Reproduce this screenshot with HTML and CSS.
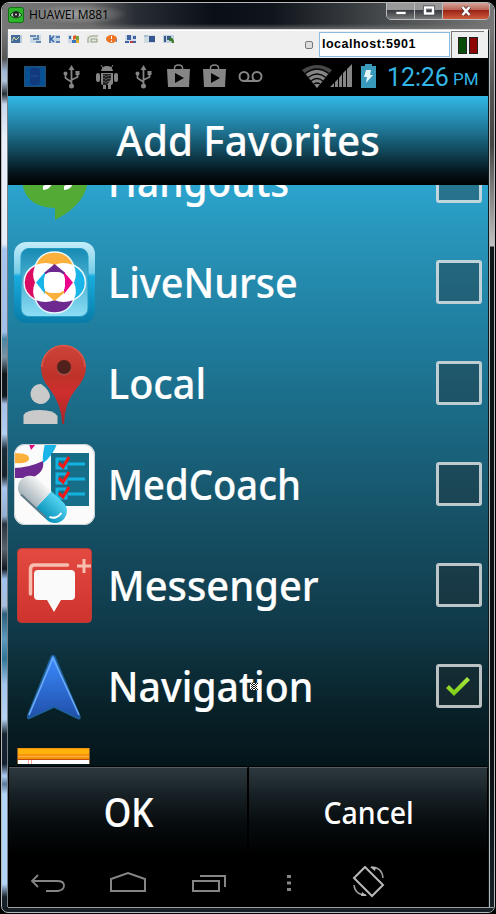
FILE: index.html
```html
<!DOCTYPE html>
<html lang="en">
<head>
<meta charset="utf-8">
<title>HUAWEI M881</title>
<link rel="stylesheet" href="styles.css">
</head>
<body>
<div class="window">
  <div class="titlebar">
    <svg class="app-icon" viewBox="0 0 16 16"><rect x=".5" y=".5" width="15" height="15" rx="2" fill="#2db52b" stroke="#146e16"/><path d="M2 8Q8 1 14 8Q8 14 2 8" fill="#b9d9b9" stroke="#173b18"/><circle cx="8" cy="7.5" r="3" fill="#222"/><circle cx="8" cy="7.5" r="1" fill="#ddd"/></svg>
    <span class="title">HUAWEI M881</span>
    <div class="controls">
      <span class="control"><svg viewBox="0 0 12 12"><rect x="1" y="6.5" width="10" height="3" fill="#fff" stroke="#4a4d55" stroke-width=".7"/></svg></span>
      <span class="control"><svg viewBox="0 0 12 12"><rect x="2" y="2.5" width="8" height="6" fill="none" stroke="#454850" stroke-width="4"/><rect x="2" y="2.5" width="8" height="6" fill="none" stroke="#fff" stroke-width="2.4"/></svg></span>
      <span class="control close"><svg viewBox="0 0 12 12"><path d="M2.5 2L9.500 10M9.500 2L2.500 10" stroke="#533" stroke-width="4"/><path d="M2.500 2L9.500 10M9.500 2L2.500 10" stroke="#fff" stroke-width="2.500"/></svg></span>
    </div>
  </div>
  <div class="edge-left"></div>
  <div class="client">
    <div class="toolbar">
      <div class="tools">
        <svg viewBox="0 0 11 8"><path fill="#b9c8d5" d="M0 0h11v8H0z"/><path fill="#436b9a" d="M0 0h9v8H0z"/><path d="M1 6l2-4 2 3 3-3" fill="none" stroke="#dedb9a"/></svg>
        <svg viewBox="0 0 11 8"><path fill="#cad9e6" d="M0 0h11v8H0z"/><path d="M0 1h6M3 4h6M8 0v3M6 7h5" stroke="#456da0" stroke-width="1.500"/></svg>
        <svg viewBox="0 0 11 8"><path fill="#c1d4e4" d="M0 0h11v8H0z"/><path d="M1 0v8M5 1L2 4l3 3M7 2h4M7 7h4" fill="none" stroke="#3a64a5" stroke-width="1.500"/></svg>
        <svg viewBox="0 0 11 8"><path fill="#cad7e4" d="M0 0h4v8H0z"/><path d="M1 1h2v3H1z" fill="#3873aa"/><path d="M5 1l3-1v4L5 5z" fill="#df5e29"/><path d="M8 1h3v4H8z" fill="#76a540"/><path d="M4 5h4v3H4z" fill="#3974bd"/><path d="M8 5h3v3H8z" fill="#e0ad34"/></svg>
        <svg viewBox="0 0 11 8"><path fill="#e3e4dc" d="M0 0h11v8H0z"/><path d="M1 8V3l3-2h7M4 4h6v3H4z" fill="none" stroke="#92a087"/></svg>
        <svg viewBox="0 0 11 8"><ellipse cx="5.500" cy="4" rx="5.500" ry="4" fill="#ed7424"/><path d="M5.500 1v3M5.500 5.500v1.500" stroke="#fff"/><path d="M10.500 4v3" stroke="#6f87a8"/></svg>
        <svg viewBox="0 0 11 8"><path fill="#d0dce7" d="M0 0h11v8H0z"/><path d="M2 0h4v5H2zM8 1h3v3H8zM8 6h3v2H8zM0 6h4v2H0z" fill="#40639f"/><path d="M5 6h3v2H5z" fill="#c03b44"/></svg>
        <svg viewBox="0 0 11 8"><path fill="#cfdae1" d="M0 0h11v8H0z"/><path d="M5 1h6v6H5z" fill="#34558e"/><path d="M0 1h4" stroke="#7fa0c0"/></svg>
        <svg viewBox="0 0 11 8"><path fill="#c0d0dc" d="M0 0h11v8H0z"/><path d="M1 1h2v6H1zM4 1h4v4H4z" fill="#39598b"/><path d="M6 3q5-1 5 5H9Q9 5 6 6z" fill="#347724"/></svg>
      </div>
      <span class="mini-box"></span>
      <span class="address">localhost:5901</span>
      <span class="leds"><i class="led green"></i><i class="led red"></i></span>
    </div>

    <div class="status">
      <div class="notifications">
        <svg viewBox="0 0 36 38"><rect x="7.500" y="8.500" width="21" height="20" fill="#075094" stroke="#284e70"/><rect x="13" y="10" width="10" height="17" rx="3" fill="#103a7c"/><path d="M14 18h8" stroke="#234f8f"/></svg>
        <svg viewBox="0 0 36 38"><g fill="none" stroke="#858585" stroke-width="1.800"><path d="M18.500 11v17M18.500 24l-6-4v-4M18.500 22l6-3v-4"/></g><g fill="#858585"><path d="M18.500 7l3 5h-6z"/><circle cx="12.500" cy="15.500" r="2"/><path d="M22.500 13h4v4h-4z"/><circle cx="18.500" cy="28" r="2.500"/></g></svg>
        <svg viewBox="0 0 36 38"><g fill="#858585"><path d="M12 13q1-5 6-5t6 5zM12 15h12v10q0 2-2 2v4h-3v-4h-2v4h-3v-4q-2 0-2-2z"/><rect x="7" y="15" width="4" height="9" rx="2"/><rect x="25" y="15" width="4" height="9" rx="2"/></g><path d="M14 10l-2-3M22 10l2-3" stroke="#858585"/><path d="M14 16h8v5l-4 6h-4z" fill="#222"/><path d="M15 17v9M17 18v8M19 17v7M21 17v5" stroke="#858585" stroke-dasharray="1 2"/></svg>
        <svg viewBox="0 0 36 38"><g fill="none" stroke="#858585" stroke-width="1.800"><path d="M18.500 11v17M18.500 24l-6-4v-4M18.500 22l6-3v-4"/></g><g fill="#858585"><path d="M18.500 7l3 5h-6z"/><circle cx="12.500" cy="15.500" r="2"/><path d="M22.500 13h4v4h-4z"/><circle cx="18.500" cy="28" r="2.500"/></g></svg>
        <svg viewBox="0 0 36 38"><path d="M6 11h23l-1 18H7z" fill="#858585"/><path d="M13.500 12v-2q0-3 4-3t4 3v2" fill="none" stroke="#858585" stroke-width="1.500"/><path d="M14 15l9 5-9 5z" fill="#050505"/></svg>
        <svg viewBox="0 0 36 38"><path d="M6 11h23l-1 18H7z" fill="#858585"/><path d="M13.500 12v-2q0-3 4-3t4 3v2" fill="none" stroke="#858585" stroke-width="1.500"/><path d="M14 15l9 5-9 5z" fill="#050505"/></svg>
        <svg viewBox="0 0 36 38"><g fill="none" stroke="#858585" stroke-width="2"><circle cx="11" cy="18.500" r="4.500"/><circle cx="24" cy="18.500" r="4.500"/><path d="M11 23h13"/></g></svg>
      </div>
      <svg class="wifi" viewBox="0 0 30 23"><path d="M0 5Q15-5 30 5L15 23z" fill="#474747"/><path d="M4 9Q15 1 26 9L15 23z" fill="#858585"/><g fill="none" stroke="#080808" stroke-width="1.500"><path d="M3 8.500Q15-.500 27 8.500M6 12.500Q15 5.500 24 12.500M9 16q6-5 12 0M12 19q3-2 6 0"/></g></svg>
      <svg class="signal" viewBox="0 0 24 24"><path d="M1 23l4-4v4zM6 18l3-3v8H6zM10 14l3-4v13h-3zM14 9l3-3v17h-3zM18 5l5-5v23h-5z" fill="#858585"/></svg>
      <svg class="battery" viewBox="0 0 15 24"><path d="M0 2h4V0h7v2h4v22H0z" fill="#3a9abc"/><path d="M5 6h5l-1 5h3L5 19l1-6H3z" fill="#e5f4f8"/></svg>
      <span class="clock">12:26</span><span class="ampm">PM</span>
    </div>

    <header class="heading"><span>Add Favorites</span></header>

    <main class="list">
      <div class="row">
        <svg class="icon" viewBox="0 0 82 82"><path d="M8 36a33 33 0 1 1 66 0q0 26-33 43V67Q8 66 8 36z" fill="#53aa35"/><path d="M28 31h10v9q0 8-9 9v-4q4-1 4-5h-5zM49 31h10v9q0 8-9 9v-4q4-1 4-5h-5z" fill="#fff"/></svg>
        <span class="label hangouts">Hangouts</span><span class="check"></span>
      </div>
      <div class="row">
        <svg class="icon" viewBox="0 0 82 82"><defs><linearGradient id="nurse" x2="0" y2="1"><stop stop-color="#168bb4"/><stop offset="1" stop-color="#8cdef5"/></linearGradient><linearGradient id="rim" x2="0" y2="1"><stop stop-color="#c4edf9"/><stop offset=".38" stop-color="#75cce7"/><stop offset=".42" stop-color="#18ade0"/><stop offset="1" stop-color="#087ba7"/></linearGradient></defs><rect width="81" height="81" rx="12" fill="url(#rim)"/><rect x="7" y="6.500" width="67" height="68" rx="8" fill="url(#nurse)" stroke="#219cc3"/><path d="M21.500 23q5-13 19-13t19 13z" fill="#fbb03b"/><path d="M21.500 23q-12 6-12 17.500T21.500 59z" fill="#dc0b62"/><path d="M59.500 23q12 6 12 17.500T59.500 59z" fill="#19b5e8"/><path d="M21.500 58Q27 71 40.500 71T59.500 58z" fill="#6e2990"/><path d="M40.500 10q14 0 19 13 12 6 12 17.500T59.500 58q-5 13-19 13t-19-13Q10 52 10 40.500T21.500 23q5-13 19-13z" fill="none" stroke="#e7f7fc" stroke-width="1.500"/><path d="M21.500 23Q32 19 40.500 23 49 19 59.500 23 64 32 60 40.500 64 50 59.500 58 49 62 40.500 58 32 62 21.500 58 17 50 21 40.500 17 32 21.500 23z" fill="#fff"/><path d="M40.500 22l11 9-5 4H35l-5-4z" fill="#6e2990"/><path d="M59 40.500L50 52V30z" fill="#ec008c"/><path d="M22 40.500L31 30v22z" fill="#19b5e8"/><path d="M40.500 59L30 50l5-3h11l5 3z" fill="#fbb03b"/><rect x="30" y="30" width="21" height="21" rx="7" fill="#fff"/></svg>
        <span class="label nurse">LiveNurse</span><span class="check"></span>
      </div>
      <div class="row">
        <svg class="icon" viewBox="0 0 82 82"><defs><linearGradient id="pin" x2="0" y2="1"><stop stop-color="#ce4439"/><stop offset=".4" stop-color="#be3229"/><stop offset=".6" stop-color="#cf2e2e"/><stop offset="1" stop-color="#a92625"/></linearGradient></defs><path d="M9.500 81v-9Q12 67 26 67t17.500 6v8z" fill="#cacaca"/><path d="M27 41q9 6 9 13a10 10 0 1 1-9-13z" fill="#cacaca"/><path d="M48.500 81Q47 60 35 45 27 36 27 24.500a22.500 22.500 0 0 1 45 0Q72 35 62 46 50 61 50 81z" fill="url(#pin)"/><path d="M28 24a21.500 21.500 0 0 1 43 0" fill="none" stroke="#d9594f" stroke-width="1.500"/><circle cx="50" cy="25" r="7.500" fill="#a84e48"/><circle cx="50" cy="24" r="7" fill="#50201d"/></svg>
        <span class="label local">Local</span><span class="check"></span>
      </div>
      <div class="row">
        <svg class="icon" viewBox="0 0 82 82"><defs><clipPath id="card"><rect width="81" height="81" rx="11"/></clipPath><linearGradient id="grey" x2="0" y2="1"><stop stop-color="#f6f6f6"/><stop offset="1" stop-color="#a1afb6"/></linearGradient><linearGradient id="aqua" x2="0" y2="1"><stop stop-color="#56d5f3"/><stop offset="1" stop-color="#0891b8"/></linearGradient></defs><g clip-path="url(#card)"><path fill="#fbfbfb" d="M0 0h81v81H0z"/><path d="M0 9q16 0 15 6 0 5-15 4z" fill="#fbb03b"/><path d="M15 0h7l-5 6z" fill="#df087e"/><path d="M0 24q14 0 29-7 2 12-12 17H0z" fill="#6e2990"/><path d="M31 0h12Q38 13 29 19 28 11 31 0z" fill="#19b5e8"/><path d="M37 9h38v53H37z" fill="#166e88"/><g fill="none" stroke="#12b4df" stroke-width="3"><path d="M43 15h9v9h-9zM43 30h9v9h-9zM43 45h9v9h-9zM54 20h17M54 35h17M54 50h17"/></g><g fill="none" stroke="#f01815" stroke-width="3"><path d="M45 19l4 4 6-10M45 34l4 4 6-10M45 49l4 4 6-10"/></g><g transform="translate(27 54) rotate(43)"><path d="M3-12h16a12 12 0 0 1 0 24H3z" fill="url(#aqua)"/><path d="M3-12h-18a12 12 0 0 0 0 24H3z" fill="url(#grey)"/><path d="M-17 11H17" stroke="#617b88" stroke-width="2"/><path d="M25-3a9 9 0 0 1-6 11" fill="none" stroke="#fff" stroke-width="2"/></g></g><rect x=".5" y=".5" width="80" height="80" rx="11" fill="none" stroke="#c8d0d3"/></svg>
        <span class="label coach">MedCoach</span><span class="check"></span>
      </div>
      <div class="row">
        <svg class="icon" viewBox="0 0 82 82"><defs><linearGradient id="red" x2="0" y2="1"><stop stop-color="#e34a41"/><stop offset="1" stop-color="#ce332d"/></linearGradient></defs><rect x="3.500" y="3.500" width="74" height="74" rx="4" fill="url(#red)" stroke="#b73e37"/><path d="M16.500 49V24q0-4 4-4h33" fill="none" stroke="#f7beb0" stroke-width="3.500" stroke-linecap="round"/><path d="M24 25h33q4 0 4 4v22q0 4-4 4H47l-7 12-7-12h-9q-4 0-4-4V29q0-4 4-4z" fill="#fafafa"/><path d="M63 21h14M70 14v14" stroke="#f7beb0" stroke-width="3"/></svg>
        <span class="label messenger">Messenger</span><span class="check"></span>
      </div>
      <div class="row">
        <svg class="icon" viewBox="0 0 82 82"><defs><linearGradient id="nav" x2="0" y2="1"><stop stop-color="#3b8cff"/><stop offset="1" stop-color="#204fa9"/></linearGradient></defs><path d="M41 11L66 71q0 3-3 1L40 61 16 72q-3 2-2-3L37 11q2-3 4 0z" fill="url(#nav)" stroke="#1d6199" stroke-width="1.500"/><path d="M15 69L39 12 65 69" fill="none" stroke="#6caaf8" stroke-width="1.600"/></svg>
        <span class="label navigation">Navigation</span><span class="check"><svg viewBox="0 0 46 44"><defs><linearGradient id="tick" x2="0" y2="1"><stop stop-color="#ace943"/><stop offset="1" stop-color="#7acb13"/></linearGradient></defs><path d="M10 24l3-3 5 5 13-13 3 3-16 16z" fill="url(#tick)"/></svg></span>
        <svg class="pointer" viewBox="0 0 8 7"><path fill="#fff" d="M0 0h8v7H0z"/><path d="M0 0h1v1H0zM2 0h1v1H2zM5 0h1v1H5zM7 0h1v1H7zM1 1h1v1H1zM3 1h1v1H3zM4 1h1v1H4zM6 1h1v1H6zM2 2h1v1H2zM5 2h1v1H5zM1 3h1v1H1zM3 3h2v1H3zM6 3h1v1H6zM2 4h1v1H2zM5 4h1v1H5zM1 5h1v1H1zM3 5h2v1H3zM6 5h1v1H6zM0 6h1v1H0zM2 6h1v1H2zM5 6h1v1H5zM7 6h1v1H7z" fill="#111"/></svg>
      </div>
      <div class="row partial">
        <svg class="icon" viewBox="0 0 82 82"><path d="M3 6h73v70H3z" fill="#fff"/><path d="M3 0h73v12H3z" fill="#f7930b"/><path d="M4 1h71v5H4z" fill="#ffb20b"/><path d="M4 8.500h71" stroke="#ffb04b"/><path d="M3 11.500h73" stroke="#bd4d12"/><path d="M14.500 12v64M17.500 12v64" stroke="#f2aa94"/><path d="M3.500 0v76M75.500 0v76" stroke="#8b5b29"/></svg>
      </div>
    </main>

    <div class="actions"><div class="button ok"><span>OK</span></div><div class="button cancel"><span>Cancel</span></div></div>
    <nav class="navbar">
      <svg viewBox="0 0 80 50"><path d="M30 9l-6 6 6 6M25 15h24q7 0 7 4.500T50 25H38" fill="none" stroke="#858585" stroke-width="1.800"/></svg>
      <svg viewBox="0 0 80 50"><path d="M23 25V13l17-6 17 6v12z" fill="none" stroke="#858585" stroke-width="2"/></svg>
      <svg viewBox="0 0 80 50"><path d="M25 15h26v10H25zM32 10h25v11" fill="none" stroke="#858585" stroke-width="2"/></svg>
      <svg viewBox="0 0 80 50"><path d="M39 9h4v3h-4zM39 15.500h4v3h-4zM39 22h4v3h-4z" fill="#858585"/></svg>
      <svg viewBox="0 0 80 50"><path d="M37 1L26 12l18 18 11-11z" fill="none" stroke="#b8b8b8" stroke-width="2"/><path d="M43 1q11 0 12 11M26 19q1 10 12 10" fill="none" stroke="#a0a0a0" stroke-width="1.500"/><path d="M42 1h6l-1 4zM39 30h-6l1-4z" fill="#b8b8b8"/></svg>
    </nav>
  </div>
  <div class="edge-right"></div>
  <div class="edge-bottom"></div>
</div>
</body>
</html>
```

FILE: styles.css
```css
* { box-sizing: border-box; }
body { margin: 0; background: #000; overflow: hidden; font-family: "Noto Sans", sans-serif; }
svg { display: block; }
.window {
  width: 494px; height: 911px; margin: 2px 0 0 1px; overflow: hidden;
  display: grid; grid-template: 26px 878px 5px / 6px 481px 5px;
  border: 1px solid #b5b9bb; border-radius: 8px 8px 7px 7px; background: #121a1e;
}
.titlebar {
  grid-column: 1 / 4; display: flex; padding-left: 6px;
  background: linear-gradient(transparent 80%, #777b 100%), linear-gradient(90deg, #777 0, #696969 18%, #292d34 27%, #0a0e16 43%, #10151c 55%, #45494b 77%, #777 100%);
}
.app-icon { width: 16px; height: 16px; margin-top: 4px; }
.title {
  width: 103px; height: 20px; margin: 1px 0 0 1px; padding-left: 4px;
  font: 12px/22px "Open Sans", sans-serif; letter-spacing: -.1px; color: #000;
  background: radial-gradient(closest-side, #aaac, #aaa0);
  white-space: nowrap; flex: none;
}
.controls { display: flex; height: 19px; margin: -2px 0 0 258px; border: 1px solid #b9bec1; border-radius: 0 0 5px 5px; overflow: hidden; flex: none; }
.control { width: 28px; display: grid; place-items: center; border-right: 1px solid #b9bec1; background: linear-gradient(#999 0 45%, #393d42 50%, #777); }
.control svg { width: 12px; height: 12px; }
.control.close { width: 46px; border: 0; background: linear-gradient(#d7ada5 0, #bd6759 45%, #9b2416 50%, #cf5c3d); }
.edge-left {
  border-right: 1px solid #777f87;
  background: linear-gradient(#777 0, #555 30px, #9eb6d6 42px, #b1c3da 52px, #252b32 65px, #c5d6ed 75px, #ebf1fa 110px, #e6eef9 215px, #a8c6ed 220px, #a2c0e7 303px, #4a84a4 310px, #7c94a5 328px, #10161a 345px, #101820 367px, #a5bfe6 375px, #b1cff3 405px, #192c38 420px, #18232c 447px, #a7c7f0 459px, #93afd1 487px, #283440 495px, #59616c 520px, #111820 540px, #9ec2ef 550px, #a8bddb 577px, #2c5e7a 585px, #5d9abf 610px, #307697 630px, #a2c6ef 655px, #b6d4f5 690px, #172430 705px, #142030 735px, #b0cff5 747px, #5d7899 755px, #b3d5fa 765px, #b3d5fa 855px, #152029 868px);
}
.client { display: grid; grid-template-rows: 28px 38px 89px 581px 1px 89px 51px; height: 878px; border-top: 1px solid #dedede; border-right: 1px solid #12191d; background: #000; }
.toolbar { grid-row: 1; display: flex; background: #efefef; border-top: 1px solid #fff; }
.tools { display: flex; gap: 8px; padding: 4px 0 0 3px; }
.tools svg { width: 11px; height: 8px; flex: none; }
.mini-box { width: 8px; height: 8px; margin: 10px 0 0 131px; flex: none; border: 1px solid #777; border-radius: 2px; background: #ddd; }
.address { width: 131px; height: 25px; margin: 1px 0 0 6px; padding-left: 2px; border: 1px solid #88bce1; background: #fff; color: #000; font: bold 12.5px/22px "Liberation Sans", sans-serif; letter-spacing: .5px; flex: none; }
.leds { width: 33px; margin-left: 1px; padding: 5px 0 0 6px; border: solid #777; border-width: 1px 0 0 1px; display: flex; gap: 2px; }
.led { width: 9px; height: 17px; border: 1px solid #222; }
.green { background: #074d08; }
.red { background: #8e0505; }
.status { grid-row: 2; display: flex; background: #000; padding-left: 9px; color: #33b5e5; }
.notifications { display: grid; grid-template-columns: repeat(7, 36px); width: 252px; flex: none; }
.notifications svg { width: 36px; height: 38px; }
.wifi { width: 30px; height: 23px; margin: 7px 0 0 33px; flex: none; }
.signal { width: 24px; height: 24px; margin: 6px 0 0 -3px; flex: none; }
.battery { width: 15px; height: 24px; margin: 6px 0 0 8px; flex: none; }
.clock { width: 65px; margin-left: 11px; font: 25px/40px Roboto, sans-serif; letter-spacing: -.1px; }
.ampm { margin-left: 1px; font: 17px/43px Roboto, sans-serif; }
.heading { grid-row: 3; display: grid; place-items: center; background: linear-gradient(#31b8e7, #217c9d 35%, #11475a 62%, #04131a 87%, #000); color: #fff; }
.heading span { font: 500 42px/60px "Noto Sans", sans-serif; margin-top: -2px; transform: scaleX(.96); white-space: nowrap; -webkit-text-stroke: .2px #fff; }
.list { grid-row: 4; overflow: hidden; background: linear-gradient(#2ba4ce, #2894b9 9%, #1f7d9d 26%, #1a6580 43%, #154e62 60%, #0f3745 78%, #082128 90%, #04151a); }
.row { position: relative; display: flex; align-items: center; height: 101px; padding: 0 6px; }
.row:first-child { margin-top: -54px; }
.row.partial { height: 27px; align-items: flex-start; overflow: hidden; padding-top: 11px; }
.icon { width: 82px; height: 82px; flex: none; }
.label { margin: -2px 0 0 12px; color: #fff; font: 500 42px/60px "Noto Sans", sans-serif; transform-origin: left; white-space: nowrap; -webkit-text-stroke: .2px #fff; }
.hangouts { transform: scaleX(.923); }
.nurse { transform: scaleX(.943); }
.local { transform: scaleX(.943); }
.coach { transform: scaleX(.91); }
.messenger { transform: scaleX(.95); }
.navigation { transform: scaleX(.935); }
.check { position: relative; width: 46px; height: 44px; margin: -2px 0 0 auto; flex: none; border: 3px solid #ffffffb5; border-radius: 3px; background: #242d3266; }
.check svg { width: 46px; height: 44px; margin: -3px; }
.pointer { position: absolute; left: 242px; top: 47px; width: 8px; height: 7px; }
.actions { grid-row: 6; display: grid; grid-template-columns: 239px 239px; gap: 1px; padding-left: 1px; }
.button { display: grid; place-items: center; border-top: 1px solid #535e62; border-right: 1px solid #000; background: linear-gradient(#2d383e, #172125 30%, #070c0f 62%, #000); color: #fff; }
.ok span { font: 500 39px/60px "Noto Sans", sans-serif; margin-left: 2px; transform: scaleX(.9); -webkit-text-stroke: .2px #fff; }
.cancel span { font: 500 30px/50px "Noto Sans", sans-serif; margin: 1px 0 0 2px; transform: scaleX(.95); }
.navbar { grid-row: 7; display: grid; grid-template-columns: repeat(5, 80px); padding-top: 10px; }
.navbar svg { width: 80px; height: 50px; }
.edge-right { border-left: 1px solid #b5b9bb; background: linear-gradient(#777 0, #555 60px, #444 115px, #777 155px, #c2c2c2 217px, #10171b 218px, #080e12 80%, #192127); }
.edge-bottom { grid-column: 1 / 4; margin-left: 6px; border-top: 1px solid #9da1a3; background: #182126; }
```
